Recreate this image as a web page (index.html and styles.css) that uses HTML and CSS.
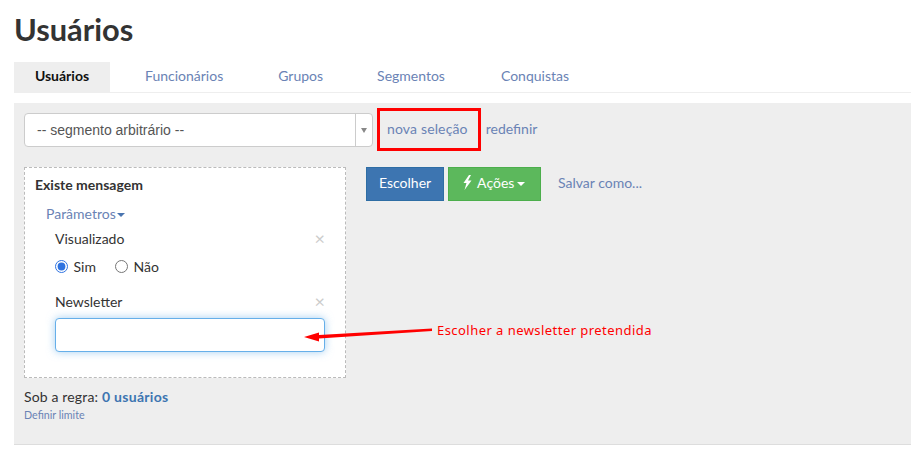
FILE: index.html
```html
<!DOCTYPE html>
<html lang="pt">
<head>
    <meta charset="UTF-8">
    <meta name="viewport" content="width=device-width, initial-scale=1.0">
    <title>Usuários</title>
    <link rel="stylesheet" href="styles.css">
</head>
<body>
    <h1>Usuários</h1>
    <div class="tabs">
        <a class="tab active" href="#">Usuários</a>
        <a class="tab tab-funcionarios" href="#">Funcionários</a>
        <a class="tab tab-grupos" href="#">Grupos</a>
        <a class="tab tab-segmentos" href="#">Segmentos</a>
        <a class="tab tab-conquistas" href="#">Conquistas</a>
    </div>
    <div class="panel">
        <div class="top-row">
            <div class="select-box">
                <span class="select-text">-- segmento arbitrário --</span>
                <span class="select-arrow"></span>
            </div>
            <a class="link link-nova" href="#">nova seleção</a>
            <a class="link" href="#">redefinir</a>
        </div>
        <div class="main-row">
            <div class="rule-box">
                <div class="rule-title">Existe mensagem</div>
                <a class="params" href="#">Parâmetros<span class="caret"></span></a>
                <div class="param-row">
                    <span>Visualizado</span>
                    <span class="remove">×</span>
                </div>
                <div class="radio-row">
                    <label><input type="radio" name="vis" checked> Sim</label>
                    <label><input type="radio" name="vis"> Não</label>
                </div>
                <div class="param-row param-news">
                    <span>Newsletter</span>
                    <span class="remove">×</span>
                </div>
                <input class="news-input" type="text">
            </div>
            <div class="actions">
                <button class="btn btn-blue">Escolher</button>
                <button class="btn btn-green">
                    <svg class="bolt" width="11" height="15" viewBox="0 0 10 15"><path d="M6.500 0 1 8h3l-2 7 7-9.500H5.500L8.500 0z" fill="#fff"/></svg>
                    Ações<span class="caret caret-white"></span>
                </button>
                <a class="link link-save" href="#">Salvar como...</a>
            </div>
        </div>
        <div class="summary">Sob a regra: <a href="#">0 usuários</a></div>
        <a class="limit" href="#">Definir limite</a>
    </div>

    <!-- annotations on top of the screenshot -->
    <div class="red-box"></div>
    <svg class="red-arrow" width="130" height="20" viewBox="0 0 130 20">
        <path d="M129 2.500 L16 9 L16 6.500 L1 11 L16 15.500 L16 12.500 L129 5z" fill="#f00"/>
    </svg>
    <div class="note">Escolher a newsletter pretendida</div>
</body>
</html>
```

FILE: styles.css
```css
body {
    margin: 0;
    font-family: Lato, Arial, sans-serif;
    font-size: 14px;
    color: #333;
    background-color: #fff;
    overflow: hidden;
}
a {
    color: #6a83b5;
    text-decoration: none;
}
h1 {
    margin: 0;
    padding: 12px 0 0 14px;
    font-size: 30.800px;
    line-height: 35px;
    font-weight: 700;
    color: #333;
}
.tabs {
    display: flex;
    margin: 15px 0 0 14px;
    height: 30px;
    border-bottom: 1px solid #eee;
}
.tab {
    line-height: 27px;
}
.active {
    width: 96px;
    text-align: center;
    background-color: #eee;
    color: #111;
    font-weight: 700;
}
.tab-funcionarios {
    margin-left: 35px;
}
.tab-grupos {
    margin-left: 55px;
}
.tab-segmentos {
    margin-left: 54px;
}
.tab-conquistas {
    margin-left: 56px;
}
.panel {
    margin: 10px 0 0 14px;
    height: 342px;
    padding: 10px;
    box-sizing: border-box;
    background-color: #eee;
    border-bottom: 1px solid #ddd;
}
.top-row {
    display: flex;
    align-items: flex-start;
    height: 54px;
}
.select-box {
    display: flex;
    width: 349px;
    height: 34px;
    box-sizing: border-box;
    background-color: #fff;
    border: 1px solid #ccc;
    border-radius: 4px;
}
.select-text {
    flex: 1;
    padding-left: 12px;
    font-family: "Liberation Sans", Arial, sans-serif;
    line-height: 32px;
    color: #555;
}
.select-arrow {
    width: 16px;
    border-left: 1px solid #ccc;
    position: relative;
}
.select-arrow::after {
    content: "";
    position: absolute;
    left: 5px;
    top: 14px;
    border-style: solid;
    border-width: 5px 3px 0;
    border-color: #888 transparent transparent;
}
.link {
    line-height: 32px;
}
.link-nova {
    margin: 0 18px 0 14px;
    letter-spacing: 0.150px;
}
.main-row {
    display: flex;
    align-items: flex-start;
}
.rule-box {
    width: 322px;
    height: 211px;
    box-sizing: border-box;
    padding: 8px 20px 0 10px;
    background-color: #fff;
    border: 1px dashed #bbb;
}
.rule-title {
    font-weight: 700;
    line-height: 18px;
    color: #333;
}
.params {
    display: block;
    margin: 11px 0 0 11px;
    line-height: 18px;
}
.caret {
    display: inline-block;
    margin-left: 1px;
    vertical-align: middle;
    border-style: solid;
    border-width: 4px 4px 0;
    border-color: #4a75b0 transparent transparent;
}
.caret-white {
    margin-left: 3px;
    border-color: #fff transparent transparent;
}
.param-row {
    display: flex;
    justify-content: space-between;
    margin: 7px 0 0 20px;
    line-height: 18px;
}
.param-news {
    margin-top: 17px;
}
.remove {
    font-size: 18px;
    line-height: 17px;
    color: #ccc;
}
.radio-row {
    display: flex;
    gap: 19px;
    margin: 10px 0 0 20px;
    line-height: 18px;
}
.radio-row input {
    margin: 0 2px 0 0;
    width: 13px;
    height: 13px;
    vertical-align: -1px;
    accent-color: #2f73e0;
}
.news-input {
    display: block;
    width: 270px;
    height: 34px;
    box-sizing: border-box;
    margin: 7px 0 0 20px;
    background-color: #fff;
    border: 1px solid #66afe9;
    border-radius: 4px;
    outline: none;
    box-shadow: 0 0 8px rgba(102, 175, 233, 0.6);
}
.actions {
    display: flex;
    align-items: center;
    margin-left: 20px;
}
.btn {
    height: 34px;
    padding: 0 12px 3px;
    font-family: inherit;
    font-size: 14px;
    color: #fff;
    border-radius: 0;
    border: 1px solid;
}
.btn-blue {
    width: 78px;
    background-color: #3d75b1;
    border-color: #2e6da4;
}
.btn-green {
    width: 93px;
    margin-left: 4px;
    padding: 0 0 3px 13px;
    text-align: left;
    background-color: #5cb85c;
    border-color: #4cae4c;
    white-space: nowrap;
}
.bolt {
    margin-right: 1px;
    vertical-align: -2px;
}
.link-save {
    margin: 0 0 2px 17px;
}
.summary {
    margin-top: 10px;
    line-height: 18px;
    letter-spacing: 0.150px;
}
.summary a {
    font-weight: 700;
    letter-spacing: 0.300px;
    color: #3d75b1;
}
.limit {
    display: block;
    margin-top: 1px;
    font-size: 10.700px;
    line-height: 16px;
}
.red-box {
    position: absolute;
    left: 377px;
    top: 108px;
    width: 104px;
    height: 43px;
    box-sizing: border-box;
    border: 3px solid #f00;
}
.red-arrow {
    position: absolute;
    left: 303px;
    top: 326px;
}
.note {
    position: absolute;
    left: 437px;
    top: 321px;
    font-family: "Noto Sans", sans-serif;
    font-size: 13px;
    letter-spacing: 0.450px;
    line-height: 18px;
    color: #f00;
}
```
